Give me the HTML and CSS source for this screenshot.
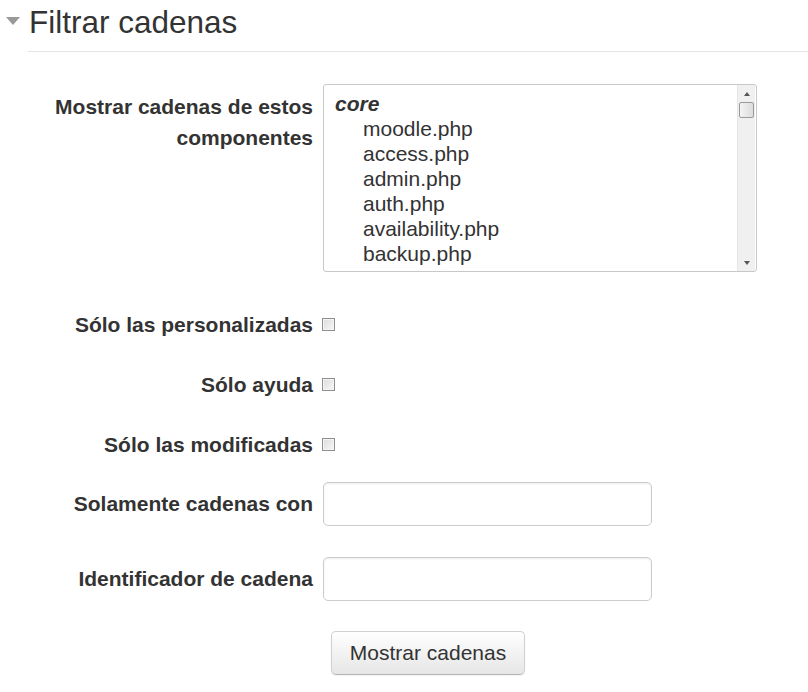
FILE: index.html
```html
<!DOCTYPE html>
<html lang="es">
<head>
<meta charset="utf-8">
<title>Filtrar cadenas</title>
<link rel="stylesheet" href="styles.css">
</head>
<body>
<fieldset class="filter">
  <legend class="legend">
    <span class="caret"></span>
    <span class="legend-text">Filtrar cadenas</span>
  </legend>
  <div class="content">
    <div class="row row-top">
      <label class="label label-multi">Mostrar cadenas de estos componentes</label>
      <div class="listbox">
        <div class="options">
          <div class="optgroup">core</div>
          <div class="option">moodle.php</div>
          <div class="option">access.php</div>
          <div class="option">admin.php</div>
          <div class="option">auth.php</div>
          <div class="option">availability.php</div>
          <div class="option">backup.php</div>
          <div class="option">badges.php</div>
        </div>
        <div class="scrollbar">
          <span class="arrow arrow-up"></span>
          <span class="thumb"></span>
          <span class="track"></span>
          <span class="arrow arrow-down"></span>
        </div>
      </div>
    </div>
    <div class="row row-check row-first-check">
      <label class="label">Sólo las personalizadas</label>
      <span class="checkbox"></span>
    </div>
    <div class="row row-check">
      <label class="label">Sólo ayuda</label>
      <span class="checkbox"></span>
    </div>
    <div class="row row-check">
      <label class="label">Sólo las modificadas</label>
      <span class="checkbox"></span>
    </div>
    <div class="row row-text row-first-text">
      <label class="label">Solamente cadenas con</label>
      <span class="textbox"></span>
    </div>
    <div class="row row-text">
      <label class="label">Identificador de cadena</label>
      <span class="textbox"></span>
    </div>
    <div class="row row-button">
      <span class="label"></span>
      <button class="button" type="button">Mostrar cadenas</button>
    </div>
  </div>
</fieldset>
</body>
</html>
```

FILE: styles.css
```css
html, body {
  margin: 0;
  padding: 0;
  background: #ffffff;
}

body {
  font-family: "Liberation Sans", Arial, sans-serif;
  color: #333333;
  width: 808px;
  height: 692px;
  overflow: hidden;
}

.filter {
  margin: 0;
  padding: 0;
  border: 0;
  min-width: 0;
}

.legend {
  display: flex;
  align-items: center;
  padding: 0;
  margin: 0;
  height: 52px;
  width: 808px;
  box-sizing: border-box;
  position: relative;
}

.legend::after {
  content: "";
  position: absolute;
  left: 28px;
  right: 0;
  bottom: 0;
  border-bottom: 1px solid #e5e5e5;
}

.legend-text {
  font-size: 31.5px;
  line-height: 40px;
  color: #333333;
  margin-top: -8px;
}

.caret {
  width: 0;
  height: 0;
  border-left: 7px solid transparent;
  border-right: 7px solid transparent;
  border-top: 8px solid #999999;
  margin: -11px 9px 0 6px;
}

.content {
  padding-top: 32px;
}

.row {
  display: flex;
  align-items: center;
}

.label {
  width: 270px;
  margin-left: 43px;
  padding-right: 10px;
  text-align: right;
  font-weight: bold;
  font-size: 21px;
  line-height: 30px;
  color: #333333;
  flex: none;
}

.row-top {
  align-items: flex-start;
}

.label-multi {
  padding-top: 7px;
  line-height: 31px;
}

.listbox {
  width: 434px;
  height: 188px;
  box-sizing: border-box;
  border: 1px solid #c8c8c8;
  border-radius: 3px;
  display: flex;
  overflow: hidden;
  background: #ffffff;
}

.options {
  flex: 1;
  padding: 6px 0 0 11px;
  overflow: hidden;
  font-size: 21px;
  line-height: 25px;
  color: #333333;
}

.optgroup {
  font-weight: bold;
  font-style: italic;
}

.option {
  padding-left: 28px;
  white-space: nowrap;
}

.scrollbar {
  width: 17px;
  margin-right: 1px;
  background: #f0f0f0;
  border-left: 1px solid #e6e6e6;
  display: flex;
  flex-direction: column;
  align-items: center;
}

.arrow {
  width: 0;
  height: 0;
  border-left: 3.5px solid transparent;
  border-right: 3.5px solid transparent;
  flex: none;
}

.arrow-up {
  border-bottom: 4px solid #555555;
  margin-top: 7px;
}

.arrow-down {
  border-top: 4px solid #555555;
  margin-bottom: 6px;
}

.thumb {
  width: 15px;
  height: 16px;
  box-sizing: border-box;
  margin-top: 6px;
  border: 1px solid #9a9a9a;
  border-radius: 2px;
  background: linear-gradient(to right, #f4f4f4, #dcdcdc);
  flex: none;
}

.track {
  flex: 1;
}

.row-check {
  height: 30px;
  margin-top: 30px;
}

.row-first-check {
  margin-top: 38px;
}

.checkbox {
  width: 13px;
  height: 13px;
  box-sizing: border-box;
  border: 1px solid #8e8f8f;
  background: linear-gradient(135deg, #dcdcdc, #f7f7f7);
  box-shadow: inset 0 0 0 1px #f4f4f4;
  margin-left: -1px;
  margin-top: -1px;
}

.row-text {
  margin-top: 31px;
}

.row-first-text {
  margin-top: 22px;
}

.textbox {
  display: block;
  width: 329px;
  height: 44px;
  box-sizing: border-box;
  border: 1px solid #cccccc;
  border-radius: 5px;
  background: #ffffff;
  box-shadow: inset 0 1px 2px rgba(0, 0, 0, 0.08);
}

.row-button {
  margin-top: 30px;
}

.row-button .label {
  padding-right: 18px;
}

.button {
  width: 194px;
  height: 44px;
  box-sizing: border-box;
  border: 1px solid #d0d0d0;
  border-bottom-color: #b5b5b5;
  border-radius: 5px;
  background: linear-gradient(to bottom, #ffffff, #e6e6e6);
  box-shadow: 0 1px 2px rgba(0, 0, 0, 0.06);
  font-family: "Liberation Sans", Arial, sans-serif;
  font-size: 21px;
  color: #333333;
  padding: 0;
  cursor: pointer;
}
```
